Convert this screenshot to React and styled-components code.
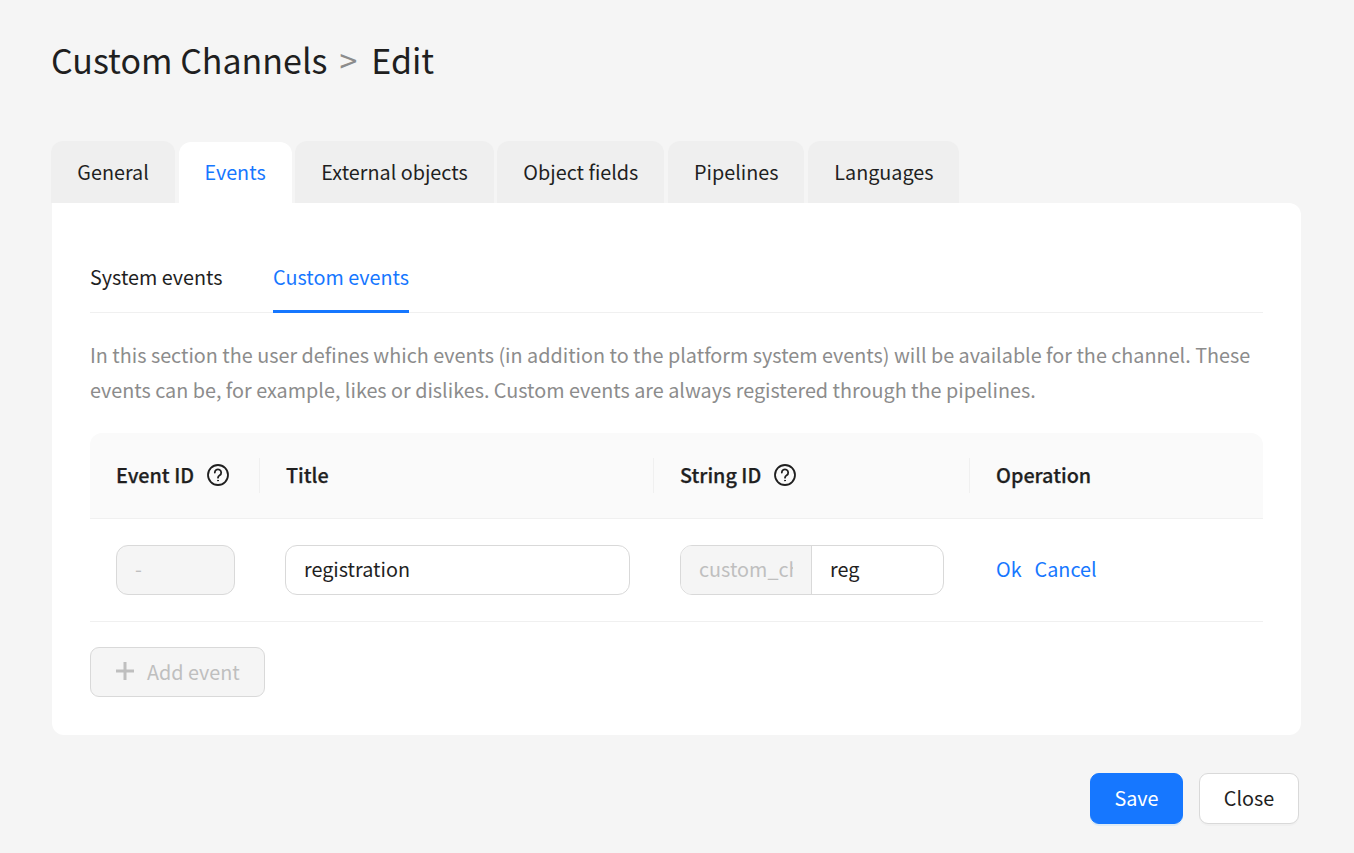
import React from "react";
import styled, { createGlobalStyle } from "styled-components";

const GlobalStyle = createGlobalStyle`
  html, body {
    margin: 0;
    padding: 0;
    background: #f5f5f5;
  }
  body {
    font-family: "Noto Sans CJK SC", "Noto Sans", sans-serif;
    color: #1f1f1f;
    overflow: hidden;
  }
`;

const Page = styled.div`
  width: 1354px;
  height: 853px;
  padding: 33px 53px 0 52px;
  box-sizing: border-box;
  background: #f5f5f5;
`;

const Heading = styled.h1`
  margin: 0 0 55px -1px;
  height: 53px;
  display: flex;
  align-items: center;
  font-size: 34px;
  font-weight: 400;
  line-height: 53px;
  span {
    color: #8c8c8c;
    margin: 0 14px 0 12px;
    font-size: 32px;
  }
`;

const Tabs = styled.div`
  display: flex;
  align-items: flex-end;
  gap: 3.9px;
  height: 62px;
  margin-left: -0.6px;
`;

const Tab = styled.div`
  height: ${(p) => (p.$active ? 61 : 62)}px;
  box-sizing: border-box;
  padding: 0 25.9px 2px;
  display: flex;
  align-items: center;
  font-size: 19.8px;
  border-radius: 12px 12px 0 0;
  background: ${(p) => (p.$active ? "#fff" : "#efefef")};
  color: ${(p) => (p.$active ? "#1677ff" : "#1f1f1f")};
`;

const Card = styled.div`
  background: #fff;
  border-radius: 0 12px 12px 12px;
  padding: 38px;
  height: 532px;
  box-sizing: border-box;
`;

const SubTabs = styled.div`
  display: flex;
  gap: 50.5px;
  height: 72px;
  box-sizing: border-box;
  border-bottom: 1px solid #f0f0f0;
`;

const SubTab = styled.div`
  height: 72px;
  box-sizing: border-box;
  padding-top: 18px;
  font-size: 19.8px;
  line-height: 36px;
  color: ${(p) => (p.$active ? "#1677ff" : "#1f1f1f")};
  border-bottom: 3px solid ${(p) => (p.$active ? "#1677ff" : "transparent")};
`;

const Description = styled.p`
  margin: 24px 0 26px;
  font-size: 19.8px;
  line-height: 35px;
  color: #8c8c8c;
`;

const Table = styled.div`
  display: grid;
  grid-template-columns: 170px 394px 316px 1fr;
`;

const HeadCell = styled.div`
  height: 86px;
  box-sizing: border-box;
  background: #fafafa;
  border-bottom: 1px solid #f0f0f0;
  display: flex;
  align-items: center;
  gap: 12.2px;
  padding: 0 0 2px 26px;
  font-size: 19.8px;
  font-weight: 500;
  -webkit-text-stroke: 0.25px #1f1f1f;
  color: #1f1f1f;
  position: relative;
  &:first-child { border-top-left-radius: 12px; }
  &:nth-child(4) { border-top-right-radius: 12px; }
  &:not(:nth-child(4))::after {
    content: "";
    position: absolute;
    right: 0;
    top: 25px;
    width: 1px;
    height: 35px;
    background: #f0f0f0;
  }
`;

const Cell = styled.div`
  height: 103px;
  box-sizing: border-box;
  border-bottom: 1px solid #f0f0f0;
  display: flex;
  align-items: center;
  padding-left: ${(p) => p.$inset ?? 26}px;
  font-size: 19.8px;
`;

const Field = styled.div`
  height: 50px;
  width: ${(p) => p.$width}px;
  box-sizing: border-box;
  border: 1px solid #d9d9d9;
  border-radius: 12px;
  padding: 0 18px 4px;
  display: flex;
  align-items: center;
  background: ${(p) => (p.$disabled ? "#f5f5f5" : "#fff")};
  color: ${(p) => (p.$disabled ? "#bfbfbf" : "#1f1f1f")};
`;

const Group = styled.div`
  display: flex;
  width: 264px;
  height: 50px;
  box-sizing: border-box;
  border: 1px solid #d9d9d9;
  border-radius: 12px;
  overflow: hidden;
`;

const Prefix = styled.div`
  width: 131px;
  box-sizing: border-box;
  padding: 0 18px 4px;
  background: #f5f5f5;
  border-right: 1px solid #d9d9d9;
  color: #bfbfbf;
  display: flex;
  align-items: center;
  white-space: nowrap;
  span {
    display: block;
    width: 100%;
    overflow: hidden;
  }
`;

const GroupValue = styled.div`
  flex: 1;
  padding: 0 18px 4px;
  display: flex;
  align-items: center;
`;

const Links = styled.div`
  display: flex;
  gap: 13px;
  padding-bottom: 4px;
  color: #1677ff;
`;

const AddButton = styled.div`
  margin-top: 25px;
  width: 175px;
  height: 50px;
  box-sizing: border-box;
  border: 1px solid #d9d9d9;
  border-radius: 9px;
  background: #f5f5f5;
  color: #bfbfbf;
  display: flex;
  align-items: center;
  gap: 13px;
  padding: 0 0 2px 25px;
  font-size: 19.8px;
`;

const Footer = styled.div`
  display: flex;
  justify-content: flex-end;
  gap: 16px;
  margin-top: 38px;
  padding-right: 2px;
`;

const Button = styled.div`
  height: 51px;
  box-sizing: border-box;
  width: ${(p) => p.$width}px;
  padding-bottom: 2px;
  border-radius: 9px;
  display: flex;
  align-items: center;
  justify-content: center;
  font-size: 19.8px;
  background: ${(p) => (p.$primary ? "#1677ff" : "#fff")};
  color: ${(p) => (p.$primary ? "#fff" : "#1f1f1f")};
  border: 1px solid ${(p) => (p.$primary ? "#1677ff" : "#d9d9d9")};
  box-shadow: 0 2px 0 ${(p) => (p.$primary ? "rgba(5,145,255,0.1)" : "rgba(0,0,0,0.02)")};
`;

const HelpIcon = () => (
  <svg width="24" height="24" viewBox="0 0 24 24" fill="none" stroke="#1f1f1f" strokeWidth="1.8" strokeLinecap="round">
    <circle cx="12" cy="12" r="10" />
    <path d="M8.8 9.6a3.2 3.2 0 1 1 4.9 2.7c-1 .6-1.7 1.2-1.7 2.4" />
    <circle cx="12" cy="17.6" r="0.5" fill="#1f1f1f" strokeWidth="1" />
  </svg>
);

const PlusIcon = () => (
  <svg width="18" height="18" viewBox="0 0 18 18" fill="none" stroke="#bfbfbf" strokeWidth="3">
    <path d="M9 0v18M0 9h18" />
  </svg>
);

export default function App() {
  return (
    <Page>
      <GlobalStyle />
      <Heading>
        Custom Channels<span>&gt;</span>Edit
      </Heading>
      <Tabs>
        <Tab>General</Tab>
        <Tab $active>Events</Tab>
        <Tab>External objects</Tab>
        <Tab>Object fields</Tab>
        <Tab>Pipelines</Tab>
        <Tab>Languages</Tab>
      </Tabs>
      <Card>
        <SubTabs>
          <SubTab>System events</SubTab>
          <SubTab $active>Custom events</SubTab>
        </SubTabs>
        <Description>
          In this section the user defines which events (in addition to the platform system events) will be available for the channel. These events can be, for example, likes or dislikes. Custom events are always registered through the pipelines.
        </Description>
        <Table>
          <HeadCell>Event ID <HelpIcon /></HeadCell>
          <HeadCell>Title</HeadCell>
          <HeadCell>String ID <HelpIcon /></HeadCell>
          <HeadCell>Operation</HeadCell>
          <Cell><Field $width={119} $disabled>-</Field></Cell>
          <Cell $inset={25}><Field $width={345}>registration</Field></Cell>
          <Cell>
            <Group>
              <Prefix><span>custom_channel_</span></Prefix>
              <GroupValue>reg</GroupValue>
            </Group>
          </Cell>
          <Cell>
            <Links>
              <span>Ok</span>
              <span>Cancel</span>
            </Links>
          </Cell>
        </Table>
        <AddButton><PlusIcon />Add event</AddButton>
      </Card>
      <Footer>
        <Button $primary $width={93}>Save</Button>
        <Button $width={100}>Close</Button>
      </Footer>
    </Page>
  );
}
